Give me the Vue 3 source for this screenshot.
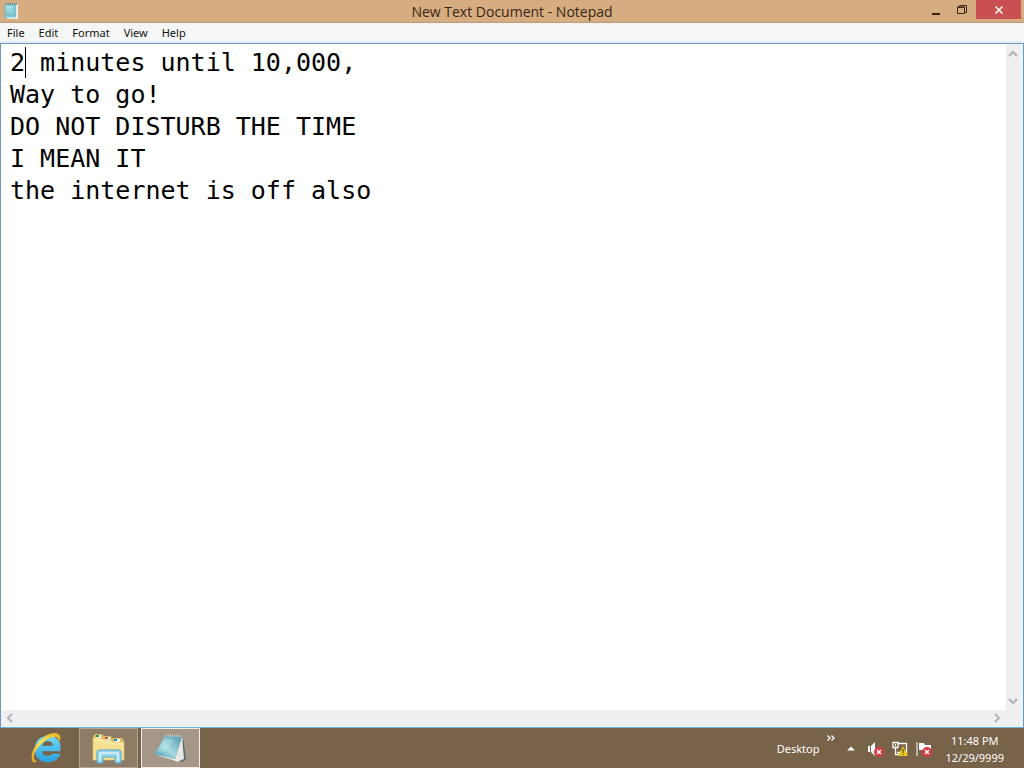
<template>
  <div class="desktop">
    <main class="window">
      <header class="title-bar">
        <svg class="app-icon" width="16" height="18" viewBox="0 0 16 18">
          <path d="M3 2h12v15H4z" fill="#f4f1e4" />
          <path d="M2 2h11v14H2z" fill="#83cbd4" stroke="#6fb3c0" stroke-width=".6" />
          <path d="M3 4h7v7H3z" fill="#b9e8e8" opacity=".7" />
          <path d="M3 7h9M3 9h9M3 11h9M3 13h9" stroke="#62aebd" stroke-width=".5" />
          <path d="M3 2h11" stroke="#5d8088" stroke-width="1.500" stroke-dasharray="1 1" />
          <path d="M14 3v13H4" fill="none" stroke="#f8f8ec" />
        </svg>
        <h1>{{ title }}</h1>
        <div class="window-buttons">
          <button type="button" aria-label="Minimize">
            <svg width="10" height="12" viewBox="0 0 10 12"><path d="M1 9h8v2H1z" fill="#3b2413" /></svg>
          </button>
          <button type="button" aria-label="Restore">
            <svg width="12" height="12" viewBox="0 0 12 12" fill="none" stroke="#3b2413">
              <path d="M1.500 3.500h7v6h-7zM1 3h8M3.500 2.500v-1h7v7h-2" />
            </svg>
          </button>
          <button type="button" class="close" aria-label="Close">
            <svg width="10" height="10" viewBox="0 0 10 10">
              <path d="M1.500 1.500l7 7M8.500 1.500l-7 7" stroke="#fff" stroke-width="1.600" />
            </svg>
          </button>
        </div>
      </header>

      <nav class="menu-bar">
        <button v-for="item in menus" :key="item" type="button">{{ item }}</button>
      </nav>

      <section class="editor">
        <div class="page">
          <textarea v-model="content" aria-label="Document text" spellcheck="false"></textarea>
          <span class="caret"></span>
        </div>
        <div class="scroll vertical">
          <button type="button" aria-label="Scroll up">
            <svg width="10" height="8" viewBox="0 0 10 8"><path d="M1 6l4-4 4 4" /></svg>
          </button>
          <button type="button" aria-label="Scroll down">
            <svg width="10" height="8" viewBox="0 0 10 8"><path d="M1 2l4 4 4-4" /></svg>
          </button>
        </div>
        <div class="scroll horizontal">
          <button type="button" aria-label="Scroll left">
            <svg width="8" height="10" viewBox="0 0 8 10"><path d="M6 1L2 5l4 4" /></svg>
          </button>
          <button type="button" aria-label="Scroll right">
            <svg width="8" height="10" viewBox="0 0 8 10"><path d="M2 1l4 4-4 4" /></svg>
          </button>
        </div>
      </section>
    </main>

    <footer class="taskbar">
      <div class="apps">
        <button type="button" aria-label="Internet Explorer">
          <svg width="34" height="34" viewBox="0 0 34 34">
            <defs>
              <linearGradient id="ie" x1="0" y1="0" x2="0" y2="1">
                <stop offset="0" stop-color="#78d9fa" />
                <stop offset="1" stop-color="#24a1dd" />
              </linearGradient>
              <linearGradient id="ring" x1="0" y1="1" x2="1" y2="0">
                <stop offset="0" stop-color="#dfa51e" />
                <stop offset=".5" stop-color="#ffe34d" />
                <stop offset="1" stop-color="#e7af22" />
              </linearGradient>
            </defs>
            <path d="M18 5C10 5 5 10 5 18s5 13 13 13c6 0 10-3 12-8h-8c-1 2-2 2-4 2-4 0-6-2-6-5h18c2-9-3-15-12-15zM12 15c1-4 3-5 6-5s5 2 5 5z" fill="url(#ie)" stroke="#4bbce8" stroke-width=".5" fill-rule="evenodd" />
            <path d="M3 31C-1 25 4 14 13 7 19 2 28 0 30 5c1 2 0 4-1 6 0-3-1-5-5-5C17 6 5 17 4 25c-.5 3 1 5 3 5-2 2-3 2-4 1z" fill="url(#ring)" />
          </svg>
        </button>
        <button type="button" class="open" aria-label="File Explorer">
          <svg width="34" height="32" viewBox="0 0 34 32">
            <path d="M1 5l2-3h7l2 2h7l1 2h10l2 3v18H1z" fill="#d8bd63" />
            <path d="M4 3h5v3H4zM13 5h5v3h-5zM22 7h6v3h-6z" fill="#fff" />
            <path d="M4 3h3v2H4z" fill="#239347" />
            <path d="M13 5h3v2h-3z" fill="#c6503b" />
            <path d="M22 7h3v2h-3z" fill="#2387bc" />
            <path d="M1 6h9l2 2h7l2 2h11v18H1z" fill="#f5df91" stroke="#e5c66e" stroke-width=".6" />
            <path d="M2 8h8l2 2h7l2 2h10" fill="none" stroke="#fff1b7" />
            <path d="M5 31V20q0-2 3-2h18q3 0 3 2v11h-6v-6H11v6z" fill="#9ad6ee" stroke="#4fa6d0" />
            <path d="M8 21h18M8 21v8M26 21v8" fill="none" stroke="#dcf4fa" stroke-width="1.500" />
          </svg>
        </button>
        <button type="button" class="open active" aria-label="Notepad">
          <svg width="34" height="32" viewBox="0 0 34 32">
            <defs>
              <linearGradient id="note" x1="1" y1="0" x2="0" y2="1">
                <stop offset="0" stop-color="#4d97aa" />
                <stop offset=".55" stop-color="#a6dae0" />
                <stop offset="1" stop-color="#3b94ad" />
              </linearGradient>
            </defs>
            <path d="M29 5l3 22-4 3-6-2z" fill="#5a6c70" />
            <path d="M28 5l2 22-7 3-5-4z" fill="#e6e5df" />
            <path d="M2 23l20 6 7-23-2 0-6 20z" fill="#f2f2ec" />
            <path d="M11 4l17 1-7 22-20-5z" fill="url(#note)" stroke="#7fbac3" stroke-width=".6" />
            <path d="M11 7l9 1-8 12-9-1z" fill="#caecef" opacity=".35" />
            <path d="M12 3l16 1" stroke="#c4cccb" stroke-width="2" stroke-dasharray="1 1" />
          </svg>
        </button>
      </div>

      <div class="tray">
        <button type="button" class="toolbar">Desktop</button>
        <button type="button" class="more" aria-label="More desktop items">
          <svg width="8" height="6" viewBox="0 0 8 6"><path d="M.500.500L3 3 .500 5.500M4.500.500L7 3 4.500 5.500" fill="none" stroke="#fff" stroke-width="1.400" /></svg>
        </button>
        <button type="button" class="hidden-icons" aria-label="Show hidden icons">
          <svg width="8" height="5" viewBox="0 0 8 5"><path d="M0 4.500L4 .500l4 4z" fill="#fff" /></svg>
        </button>
        <div class="status-icons">
          <button type="button" aria-label="Volume muted">
            <svg width="16" height="16" viewBox="0 0 16 16">
              <path d="M0 5h2v6H0zM3 5l4-4v14l-4-4z" fill="#fff" />
              <circle cx="11" cy="11" r="5" fill="#d83b43" />
              <path d="M9 9l4 4m0-4l-4 4" stroke="#fff" stroke-width="1.500" />
            </svg>
          </button>
          <button type="button" aria-label="Network warning">
            <svg width="16" height="16" viewBox="0 0 16 16">
              <path d="M5 2.500h9.500v9H5M3.500 6v7.500H9" fill="none" stroke="#fff" stroke-width="1.300" />
              <path d="M1 1.500h5v5H1z" fill="#756044" stroke="#fff" stroke-width="1.300" />
              <path d="M3.500 3v2" fill="none" stroke="#fff" />
              <path d="M11 5l5 10H6z" fill="#efc719" />
              <path d="M11 8v4M11 13v1" stroke="#40340b" />
            </svg>
          </button>
          <button type="button" aria-label="Action Center alert">
            <svg width="16" height="16" viewBox="0 0 16 16">
              <path d="M1 1v14" stroke="#fff" />
              <path d="M3 2h5l1 2h6v7H9L7 9H3z" fill="#fff" />
              <circle cx="11" cy="11" r="5" fill="#d83b43" />
              <path d="M9 9l4 4m0-4l-4 4" stroke="#fff" stroke-width="1.500" />
            </svg>
          </button>
        </div>
        <button type="button" class="clock">
          <time>11:48 PM</time>
          <time>12/29/9999</time>
        </button>
      </div>
    </footer>
  </div>
</template>

<script setup>
import { ref } from 'vue'

const title = 'New Text Document - Notepad'
const menus = ['File', 'Edit', 'Format', 'View', 'Help']

const content = ref(`2 minutes until 10,000,
Way to go!
DO NOT DISTURB THE TIME
I MEAN IT
the internet is off also`)
</script>

<style>
body {
  margin: 0;
}
</style>

<style scoped>
.desktop {
  display: flex;
  flex-direction: column;
  height: 100vh;
  overflow: hidden;
  font-family: "Noto Sans", "Open Sans", sans-serif;
  font-size: 11px;
  background: #786249;
}

button {
  padding: 0;
  border: 0;
  background: transparent;
  color: inherit;
  font: inherit;
}

svg {
  display: block;
}

.window {
  flex: 1;
  min-height: 0;
  display: flex;
  flex-direction: column;
}

.title-bar {
  display: grid;
  grid-template-columns: 1fr auto 1fr;
  align-items: start;
  height: 23px;
  box-sizing: border-box;
  border-bottom: 1px solid #bd9c7d;
  background: #d5ad81;
}

.app-icon {
  margin: 2px 0 0 3px;
}

.title-bar h1 {
  margin: 0;
  color: #3b2413;
  font-family: "Open Sans", sans-serif;
  font-size: 14px;
  font-weight: 400;
  line-height: 23px;
}

.window-buttons {
  display: flex;
  justify-content: flex-end;
  padding-right: 3px;
}

.window-buttons button {
  display: grid;
  place-items: center;
  width: 26px;
  height: 19px;
}

.window-buttons .close {
  width: 45px;
  margin-left: 1px;
  background: #c94f50;
}

.menu-bar {
  display: flex;
  gap: 14px;
  height: 20px;
  box-sizing: border-box;
  padding: 0 7px;
  border-bottom: 2px solid #e2effa;
  background: #f5f7f7;
  color: #111;
}

.editor {
  flex: 1;
  min-height: 0;
  display: grid;
  grid-template: 1fr 16px / 1fr 14px;
  padding: 0 3px 1px 0;
  border: 1px solid #7096c0;
  border-bottom-color: #69b4de;
  background: #eaf5fc;
}

.page {
  position: relative;
  display: flex;
  min-width: 0;
  background: #fff;
}

textarea {
  flex: 1;
  min-width: 0;
  padding: 3px 9px;
  border: 0;
  outline: 0;
  resize: none;
  overflow: hidden;
  background: #fff;
  color: #000;
  font-family: "DejaVu Sans Mono", monospace;
  font-size: 25px;
  line-height: 32px;
}

.caret {
  position: absolute;
  top: 3px;
  left: 24px;
  width: 1px;
  height: 31px;
  background: #000;
}

.scroll {
  display: flex;
  justify-content: space-between;
  align-items: center;
  background: #efeff0;
}

.scroll path {
  fill: none;
  stroke: #b4b4b6;
  stroke-width: 2;
}

.vertical {
  flex-direction: column;
  padding: 6px 0 5px;
}

.horizontal {
  grid-column: 1 / -1;
  padding: 0 19px 0 5px;
}

.taskbar {
  display: flex;
  justify-content: space-between;
  height: 40px;
  background: #786249;
  color: #fff;
}

.apps {
  display: flex;
  gap: 3px;
  padding-left: 17px;
}

.apps button {
  display: grid;
  place-items: center;
  width: 59px;
  height: 40px;
  box-sizing: border-box;
}

.apps .open {
  border: 1px solid #b3a491;
  background: #8e7c66;
}

.apps .active {
  border-color: #f3eee7;
  background: #a49787;
}

.tray {
  display: flex;
  align-items: center;
  padding-right: 20px;
}

.more {
  align-self: flex-start;
  margin: 7px 12px 0 8px;
}

.status-icons {
  display: flex;
  gap: 8px;
  margin: 2px 13px 0 13px;
}

.clock {
  display: flex;
  flex-direction: column;
  align-items: center;
  padding-top: 1px;
  line-height: 17px;
}
</style>
